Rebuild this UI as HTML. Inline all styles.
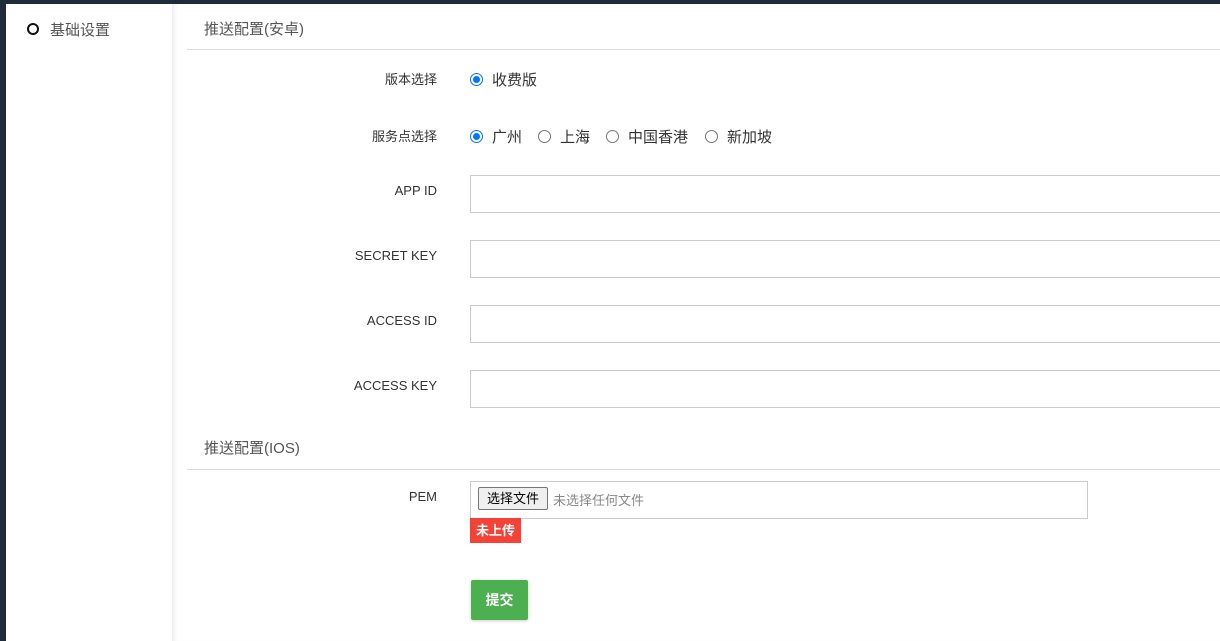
<!DOCTYPE html>
<html><head><meta charset="utf-8"><style>
*{margin:0;padding:0;box-sizing:border-box}
body{width:1220px;height:641px;overflow:hidden;background:#1f2a3a;font-family:"Liberation Sans","Noto Sans CJK SC",sans-serif;position:relative;color:#333}
.side{position:absolute;left:6px;top:4px;width:166px;height:637px;background:#fff}
.main{position:absolute;left:172px;top:4px;width:1048px;height:637px;background:#fff;box-shadow:inset 5px 0 5px -3px rgba(0,0,0,.08)}
.a{position:absolute;white-space:nowrap}
.lbl{position:absolute;right:783px;font-size:13px;color:#333;text-align:right}
.inp{position:absolute;left:470px;width:760px;height:38px;border:1px solid #ccc;background:#fff}
.hdr{position:absolute;left:204px;font-size:15px;color:#555}
.line{position:absolute;left:187px;width:1033px;height:1px;background:#ddd}
.r{position:absolute;width:13px;height:13px;border-radius:50%;border:1px solid #767676;background:#fff}
.r.on{border:1px solid #0075ff;}
.r.on::after{content:"";position:absolute;left:2px;top:2px;width:7px;height:7px;border-radius:50%;background:#0075ff}
.rt{position:absolute;font-size:15px;color:#333}
</style></head><body>
<div class="side"></div>
<div class="main"></div>
<div class="a" style="left:27px;top:23px;width:12px;height:12px;border:2px solid #111;border-radius:50%"></div>
<div class="a" style="left:50px;top:19px;font-size:15px;color:#555">基础设置</div>

<div class="hdr" style="top:18px">推送配置(安卓)</div>
<div class="line" style="top:49px"></div>

<div class="lbl" style="top:69px">版本选择</div>
<div class="r on" style="left:470px;top:73px"></div><div class="rt" style="left:492px;top:69px">收费版</div>

<div class="lbl" style="top:126px">服务点选择</div>
<div class="r on" style="left:470px;top:130px"></div><div class="rt" style="left:492px;top:126px">广州</div>
<div class="r" style="left:538px;top:130px"></div><div class="rt" style="left:560px;top:126px">上海</div>
<div class="r" style="left:606px;top:130px"></div><div class="rt" style="left:628px;top:126px">中国香港</div>
<div class="r" style="left:705px;top:130px"></div><div class="rt" style="left:727px;top:126px">新加坡</div>

<div class="lbl" style="top:183px">APP ID</div><div class="inp" style="top:175px"></div>
<div class="lbl" style="top:248px">SECRET KEY</div><div class="inp" style="top:240px"></div>
<div class="lbl" style="top:313px">ACCESS ID</div><div class="inp" style="top:305px"></div>
<div class="lbl" style="top:378px">ACCESS KEY</div><div class="inp" style="top:370px"></div>

<div class="hdr" style="top:437px">推送配置(IOS)</div>
<div class="line" style="top:469px"></div>

<div class="lbl" style="top:489px">PEM</div>
<div class="a" style="left:470px;top:481px;width:618px;height:38px;border:1px solid #ccc"></div>
<div class="a" style="left:478px;top:487px;width:70px;height:23px;border:1px solid #767676;border-radius:2px;background:#efefef;font-size:13px;color:#000;text-align:center;line-height:21px">选择文件</div>
<div class="a" style="left:553px;top:490px;font-size:13px;color:#888">未选择任何文件</div>
<div class="a" style="left:470px;top:518px;width:51px;height:25px;background:#f44336;color:#fff;font-size:13px;font-weight:bold;line-height:25px;text-align:center">未上传</div>

<div class="a" style="left:471px;top:580px;width:57px;height:40px;background:#4caf50;border-radius:2px;color:#fff;font-size:14px;font-weight:bold;line-height:40px;text-align:center;box-shadow:0 1px 3px rgba(0,0,0,.2)">提交</div>
</body></html>
